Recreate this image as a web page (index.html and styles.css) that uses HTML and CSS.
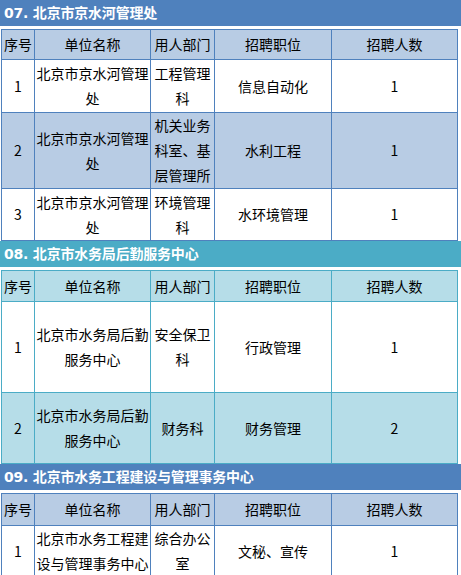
FILE: index.html
```html
<!DOCTYPE html>
<html lang="zh-CN">
<head>
<meta charset="utf-8">
<title>招聘</title>
<link rel="stylesheet" href="styles.css">
</head>
<body>
<section class="sec blue">
  <h2 class="band">07. 北京市京水河管理处</h2>
  <table class="jobs">
    <colgroup><col class="c1"><col class="c2"><col class="c3"><col class="c4"><col class="c5"></colgroup>
    <tr class="head h30"><td>序号</td><td>单位名称</td><td>用人部门</td><td>招聘职位</td><td>招聘人数</td></tr>
    <tr class="h53"><td>1</td><td>北京市京水河管理处</td><td>工程管理科</td><td>信息自动化</td><td>1</td></tr>
    <tr class="alt h76"><td>2</td><td>北京市京水河管理处</td><td>机关业务科室、基层管理所</td><td>水利工程</td><td>1</td></tr>
    <tr class="h52"><td>3</td><td>北京市京水河管理处</td><td>环境管理科</td><td>水环境管理</td><td>1</td></tr>
  </table>
</section>
<section class="sec aqua">
  <h2 class="band">08. 北京市水务局后勤服务中心</h2>
  <table class="jobs">
    <colgroup><col class="c1"><col class="c2"><col class="c3"><col class="c4"><col class="c5"></colgroup>
    <tr class="head h31"><td>序号</td><td>单位名称</td><td>用人部门</td><td>招聘职位</td><td>招聘人数</td></tr>
    <tr class="h91"><td>1</td><td>北京市水务局后勤服务中心</td><td>安全保卫科</td><td>行政管理</td><td>1</td></tr>
    <tr class="alt h71"><td>2</td><td>北京市水务局后勤服务中心</td><td>财务科</td><td>财务管理</td><td>2</td></tr>
  </table>
</section>
<section class="sec blue">
  <h2 class="band">09. 北京市水务工程建设与管理事务中心</h2>
  <table class="jobs">
    <colgroup><col class="c1"><col class="c2"><col class="c3"><col class="c4"><col class="c5"></colgroup>
    <tr class="head h32"><td>序号</td><td>单位名称</td><td>用人部门</td><td>招聘职位</td><td>招聘人数</td></tr>
    <tr class="h51"><td>1</td><td>北京市水务工程建设与管理事务中心</td><td>综合办公室</td><td>文秘、宣传</td><td>1</td></tr>
  </table>
</section>
</body>
</html>
```

FILE: styles.css
```css
html, body {
  margin: 0;
  padding: 0;
  background: #ffffff;
}
body {
  font-family: "Noto Sans CJK SC", "Liberation Sans", sans-serif;
  font-size: 14px;
  color: #000000;
}
.band {
  margin: 0 0 3px 0;
  height: 26px;
  line-height: 26px;
  padding: 0 0 0 4px;
  font-size: 14px;
  font-weight: bold;
  color: #ffffff;
  font-family: "DejaVu Sans", "Noto Sans CJK SC", sans-serif;
  letter-spacing: -0.2px;
}
.blue .band { background: #4f81bd; }
.aqua .band { background: #4bacc6; }

.jobs {
  border-collapse: collapse;
  table-layout: fixed;
  width: 457px;
  margin-left: 1px;
}
.c1 { width: 33px; }
.c2 { width: 116px; }
.c3 { width: 64px; }
.c4 { width: 117px; }
.c5 { width: 126px; }

.jobs td {
  padding: 0 1px;
  text-align: center;
  vertical-align: middle;
  line-height: 25px;
  word-break: break-all;
}
.blue .jobs td { border: 1px solid #4f81bd; }
.aqua .jobs td { border: 1px solid #4bacc6; }
.blue .head, .blue .alt { background: #b8cce4; }
.aqua .head, .aqua .alt { background: #b6dde8; }

.h30 { height: 30px; }
.h31 { height: 31px; }
.h32 { height: 32px; }
.h51 { height: 51px; }
.h52 { height: 52px; }
.h53 { height: 53px; }
.h71 { height: 71px; }
.h76 { height: 76px; }
.h91 { height: 91px; }
```
